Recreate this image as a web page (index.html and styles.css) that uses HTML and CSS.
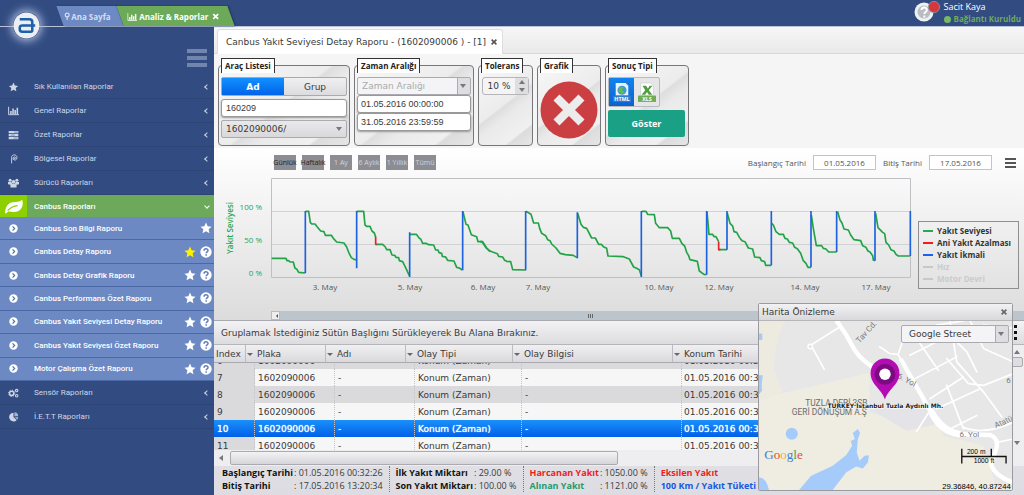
FILE: index.html
```html
<!DOCTYPE html>
<html lang="tr">
<head>
<meta charset="utf-8">
<title>Analiz &amp; Raporlar</title>
<link rel="stylesheet" href="styles.css">
</head>
<body>
<svg class="defs" aria-hidden="true">
  <symbol id="star" viewBox="0 0 16 16"><path d="M8 .8l2.200 4.800 5.200.6-3.900 3.500 1.100 5.200L8 12.300l-4.600 2.600 1.100-5.200L.6 6.200l5.200-.6z" fill="currentColor"/></symbol>
  <symbol id="help" viewBox="0 0 16 16"><circle cx="8" cy="8" r="7.600" fill="currentColor"/><path d="M5.400 6.200C5.400 3 10.700 3 10.700 6c0 1.900-2.500 1.800-2.500 3.700M8.200 11v2" fill="none" stroke="#5f7cb8" stroke-width="2"/></symbol>
  <symbol id="go" viewBox="0 0 16 16"><circle cx="8" cy="8" r="7.500" fill="currentColor"/><path d="M6.300 4.300L10 8l-3.700 3.700" fill="none" stroke="#5370ac" stroke-width="2.200"/></symbol>
  <symbol id="bars" viewBox="0 0 18 14"><path d="M1 0v13h17" fill="none" stroke="currentColor" stroke-width="1.600"/><path d="M3.500 7h2.500v5h-2.500zM7 3h2.500v9H7zM10.500 5.500h2.500V12h-2.500zM14 1.500h2.500V12h-2.500z" fill="currentColor"/></symbol>
</svg>

<header class="top">
  <a class="logo" href="#" aria-label="Ana ekran"><svg viewBox="0 0 28 28"><circle cx="14" cy="14" r="13.500" fill="#eceef1"/><path d="M7 7.500h10q3 0 3 3V19q0 1.500-1.500 1.500h-9q-2.500 0-2.500-2.500v-1.500q0-2.500 2.500-2.500H23M20 14H9" fill="none" stroke="#1d5fa8" stroke-width="2.600"/></svg></a>
  <nav class="tabs">
    <a class="tab" href="#"><span><svg class="pin" viewBox="0 0 10 14"><path d="M5 13V8" stroke="currentColor" stroke-width="2"/><circle cx="5" cy="4.500" r="3.200" fill="none" stroke="currentColor" stroke-width="2"/></svg>Ana Sayfa</span></a>
    <a class="tab active" href="#"><span><svg class="chart-ic"><use href="#bars"/></svg>Analiz &amp; Raporlar<svg class="close-ic" viewBox="0 0 10 10"><path d="M1.500 1.500l7 7M8.500 1.500l-7 7" stroke="currentColor" stroke-width="2.400"/></svg></span></a>
  </nav>
  <div class="user">
    <svg viewBox="0 0 28 22"><circle cx="10" cy="12" r="9.500" fill="#eef0f3"/><circle cx="10" cy="12" r="6.500" fill="#b9bcc2"/><path d="M7.500 10c0-3.400 5.400-3.400 5.400 0 0 2-2.600 2-2.600 4M10.300 15.500v2" fill="none" stroke="#fff" stroke-width="1.900"/><circle cx="20" cy="7" r="5.600" fill="#d8373a" stroke="#8d98ae" stroke-width=".8"/></svg>
    <div><div class="name">Sacit Kaya</div><div class="status"><i></i>Bağlantı Kuruldu</div></div>
  </div>
</header>

<div class="shell">
<aside class="side">
  <button class="burger" aria-label="Menü"><i></i><i></i><i></i></button>
  <ul class="menu">
    <li><a href="#"><svg class="ic"><use href="#star"/></svg><span>Sık Kullanılan Raporlar</span><b class="chev"></b></a></li>
    <li><a href="#"><svg class="ic"><use href="#bars"/></svg><span>Genel Raporlar</span><b class="chev"></b></a></li>
    <li><a href="#"><svg class="ic" viewBox="0 0 16 14"><path d="M1 1h14v3.400H1zM1 5.400h14v3.400H1zM1 9.800h14v3.400H1z" fill="currentColor"/><path d="M9 2.700h5M4 7.100h6M8 11.500h6" stroke="#5a6f9b" stroke-width="1"/></svg><span>Özet Raporlar</span><b class="chev"></b></a></li>
    <li><a href="#"><svg class="ic" viewBox="0 0 14 16"><path d="M4 15V6c0-7 9-5.500 8.500 0-.4 4-4 4.500-6 2.500M6.500 8.500c-1-4 3.500-5 3.500-2.500s-2 2-2 .5" fill="none" stroke="currentColor" stroke-width="1.500"/></svg><span>Bölgesel Raporlar</span><b class="chev"></b></a></li>
    <li><a href="#"><svg class="ic" viewBox="0 0 18 16"><g fill="currentColor"><circle cx="3.500" cy="3.500" r="2.500"/><circle cx="14.500" cy="3.500" r="2.500"/><circle cx="9" cy="6" r="3"/><path d="M0 10V6.500h5.500L7 9l-3 2zM18 10V6.500h-5.500L11 9l3 2zM4 15.500V11q1-2 5-2t5 2v4.500z"/></g></svg><span>Sürücü Raporları</span><b class="chev"></b></a></li>
    <li class="open"><a href="#"><span class="leaf"><svg viewBox="0 0 22 16"><path d="M1 15C2 6 6 3 12 3c4 0 6-1 8-2.500C22 7 19 14 11 14c-3 0-5-.8-6.500-.5L2 16z" fill="#fff"/><path d="M4 12.500C7 9 10 7.500 15 7" fill="none" stroke="#8cd000" stroke-width="1.300"/></svg></span><span>Canbus Raporları</span><b class="chev down"></b></a>
      <ul class="sub">
        <li><a href="#"><svg class="go"><use href="#go"/></svg><span>Canbus Son Bilgi Raporu</span></a><svg class="act"><use href="#star"/></svg></li>
        <li><a href="#"><svg class="go"><use href="#go"/></svg><span>Canbus Detay Raporu</span></a><svg class="act fav"><use href="#star"/></svg><svg class="act"><use href="#help"/></svg></li>
        <li><a href="#"><svg class="go"><use href="#go"/></svg><span>Canbus Detay Grafik Raporu</span></a><svg class="act"><use href="#star"/></svg><svg class="act"><use href="#help"/></svg></li>
        <li><a href="#"><svg class="go"><use href="#go"/></svg><span>Canbus Performans Özet Raporu</span></a><svg class="act"><use href="#star"/></svg><svg class="act"><use href="#help"/></svg></li>
        <li><a href="#"><svg class="go"><use href="#go"/></svg><span>Canbus Yakıt Seviyesi Detay Raporu</span></a><svg class="act"><use href="#star"/></svg><svg class="act"><use href="#help"/></svg></li>
        <li><a href="#"><svg class="go"><use href="#go"/></svg><span>Canbus Yakıt Seviyesi Özet Raporu</span></a><svg class="act"><use href="#star"/></svg><svg class="act"><use href="#help"/></svg></li>
        <li><a href="#"><svg class="go"><use href="#go"/></svg><span>Motor Çalışma Özet Raporu</span></a><svg class="act"><use href="#star"/></svg><svg class="act"><use href="#help"/></svg></li>
      </ul>
    </li>
    <li><a href="#"><svg class="ic" viewBox="0 0 18 16"><g fill="none" stroke="currentColor"><circle cx="6" cy="8.500" r="3.500" stroke-width="2.400"/><circle cx="6" cy="8.500" r="5.200" stroke-width="1.500" stroke-dasharray="2 2.080"/><circle cx="14.200" cy="4" r="2" stroke-width="1.800"/><circle cx="14.200" cy="12.500" r="2" stroke-width="1.800"/></g></svg><span>Sensör Raporları</span><b class="chev"></b></a></li>
    <li><a href="#"><svg class="ic" viewBox="0 0 16 16"><path d="M8 8V1a7 7 0 1 0 5 12z" fill="currentColor"/><path d="M9.500 6.800V.5a6.500 6.500 0 0 1 6 6.300zM9.700 8.300h6a7 7 0 0 1-1.800 4z" fill="currentColor" opacity=".75"/></svg><span>İ.E.T.T Raporları</span><b class="chev"></b></a></li>
  </ul>
</aside>

<main class="main">
  <div class="doc-tabs"><div class="doc-tab">Canbus Yakıt Seviyesi Detay Raporu - (1602090006 ) - [1]<button aria-label="Kapat"><svg viewBox="0 0 10 10"><path d="M2 2l6 6M8 2L2 8" stroke="#555" stroke-width="2"/></svg></button></div></div>

  <form class="filters">
    <fieldset class="f-vehicle"><legend>Araç Listesi</legend>
      <div class="seg"><button type="button" class="on">Ad</button><button type="button">Grup</button></div>
      <input class="box" aria-label="Araç ara" value="160209">
      <div class="combo grey"><select aria-label="Araç"><option>1602090006/</option></select></div>
    </fieldset>
    <fieldset class="f-time"><legend>Zaman Aralığı</legend>
      <div class="combo split faint"><select aria-label="Zaman aralığı"><option>Zaman Aralığı</option></select></div>
      <input class="box date" aria-label="Başlangıç" value="01.05.2016 00:00:00">
      <input class="box date" aria-label="Bitiş" value="31.05.2016 23:59:59">
    </fieldset>
    <fieldset class="f-tol"><legend>Tolerans</legend>
      <div class="spin"><input aria-label="Tolerans" value="10 %"><div><button type="button" class="up" aria-label="Artır"></button><button type="button" class="dn" aria-label="Azalt"></button></div></div>
    </fieldset>
    <fieldset class="f-graph"><legend>Grafik</legend>
      <button type="button" class="cross" aria-label="Grafik kapalı"><svg viewBox="0 0 58 58"><circle cx="29" cy="29" r="28.500" fill="#cb3f42"/><path d="M19.500 19.500l19 19M38.500 19.500l-19 19" stroke="#ececec" stroke-width="8.500" stroke-linecap="square"/></svg></button>
    </fieldset>
    <fieldset class="f-type"><legend>Sonuç Tipi</legend>
      <div class="types">
        <button type="button" class="on" aria-label="HTML"><svg viewBox="0 0 20 22"><path d="M3 1h11l3 3v11H3z" fill="#e9f2fa"/><circle cx="10" cy="9" r="5" fill="#3c9ad6"/><path d="M7 5l5 1-2 3 3 2-3 2.500-4-3z" fill="#63bb4f"/><rect y="15" width="20" height="7" fill="#2c80cf"/><text x="10" y="21" class="tag">HTML</text></svg></button>
        <button type="button" aria-label="XLS"><svg viewBox="0 0 20 22"><path d="M3 1h11l3 3v11H3z" fill="#fff" stroke="#b9c9b2" stroke-width=".6"/><path d="M5 4h4l2 3 2-3h3l-4 5 4 5h-4l-2-3-2 3H4l4-5z" fill="#4f9e3f"/><rect y="15" width="20" height="7" fill="#6fac53"/><text x="10" y="21" class="tag">XLS</text></svg></button>
      </div>
      <button type="button" class="show">Göster</button>
    </fieldset>
  </form>

  <section class="chart">
    <div class="chart-bar">
      <div class="ranges"><button class="lit"><span>Günlük</span></button><button class="lit"><span>Haftalık</span></button><button><span>1 Ay</span></button><button><span>6 Aylık</span></button><button><span>1 Yıllık</span></button><button><span>Tümü</span></button></div>
      <div class="dates"><label for="d1">Başlangıç Tarihi</label><input id="d1" value="01.05.2016"><label for="d2">Bitiş Tarihi</label><input id="d2" value="17.05.2016">
      <button class="ctx" aria-label="Grafik menüsü"><i></i><i></i><i></i></button></div>
    </div>
    <div class="chart-body">
      <svg class="plot" viewBox="214 176 700 120" role="img" aria-label="Yakıt Seviyesi">
        <g fill="none" stroke="#d2d2d5"><path d="M271.500 211.500H910.500M271.500 244.500H910.500"/><path d="M271.500 178.500H910.500V277.500H271.500z" stroke="#bfc0c4"/></g>
        <g class="ylab"><text x="262" y="210">100 %</text><text x="262" y="243">50 %</text><text x="262" y="276">0 %</text></g>
        <text class="ytitle" transform="translate(233 228) rotate(-90)">Yakıt Seviyesi</text>
        <g class="xlab"><text x="325" y="290">3. May</text><text x="410" y="290">5. May</text><text x="483" y="290">6. May</text><text x="538" y="290">7. May</text><text x="659" y="290">10. May</text><text x="719" y="290">12. May</text><text x="805" y="290">14. May</text><text x="876" y="290">17. May</text></g>
        <g transform="translate(210 145) scale(.33333)" class="fuel">
          <path class="g" d="M185 340H228L231 347H236L240 351H250L255 370 260 372 266 382 286 384M287 199H296L301 233 306 237H315L322 246 332 258 342 260 346 271H364L370 280 380 291 402 294 410 306 416 322 424 338 432 343 440 345M440 199H461L465 240 470 244H480L486 258 493 264 497 276M497 298H518L526 306 530 314H540L546 330 554 331 558 337 566 338 568 347 578 350 588 370 598 392M600 268H619L628 280 632 282 638 295H648L656 299 671 300 677 315 684 315 687 323 695 325 697 334 707 336 713 346 732 348 740 367 748 369 757 375M759 200L768 238 774 240 784 269 800 275 804 290 816 290 828 308 840 320"/>
          <path class="b" d="M286 384V198M440 370V198M599 396V262M758 376V198"/><path class="r" d="M497 275V298H500"/>
          <g transform="translate(810 0)">
            <path class="g" d="M0 290H8L15 301 20 309 30 318 40 322 52 326 56 334 68 336 74 346 80 349 92 350 98 374 137 375M138 199L153 208 161 234H175L179 250 185 265 197 272 203 284 210 287 215 297 228 309 240 325 256 329 280 331 291 338M293 205L303 238 310 247 320 250 335 279H346L356 298 364 298 370 305 380 310 384 333 430 335 448 342 461 366 470 370 478 374 484 392M485 199H498L503 208 523 209 527 235 538 248 563 248 572 258 577 280H598L606 296 614 303 620 322 626 332 630 344 652 349 658 378 672 388 679 389M681 200L687 268H698L702 275H708L716 290M716 314H741M742 205L750 235 758 243 762 260 770 262 780 280"/>
            <path class="b" d="M137 376V198M292 340V202M484 396V198M680 389V198M741 314V198"/><path class="r" d="M716 290V314H721"/>
          </g>
          <g transform="translate(1590 0)">
            <path class="g" d="M0 280L6 287 15 290 25 309 38 312 44 336 60 338 64 347 74 350 77 361H94M95 235L100 240 108 260 118 268H130L135 280 142 282 148 292 158 294 164 307 172 311 182 325 190 347 198 355 204 367H213M214 210L220 250 229 302H245L250 310 258 312 266 321H290M293 200L300 225 306 234 312 252 325 255 332 270 342 284 362 287 368 302 378 307 384 318 390 321 398 332 400 345 405 347M407 205L414 248 428 262 434 266 438 292 446 300 453 314 462 318 468 328 475 333H510"/>
            <path class="b" d="M94 361V198M213 367V198M290 321V198M405 347V198M511 333V198"/>
          </g>
        </g>
      </svg>
      <ul class="legend"><li class="g">Yakıt Seviyesi</li><li class="r">Ani Yakıt Azalması</li><li class="b">Yakıt İkmali</li><li class="off">Hız</li><li class="off">Motor Devri</li></ul>
    </div>
    <div class="nav-scroll"><button aria-label="Sola kaydır"></button><span><i></i><i></i><i></i></span></div>
  </section>

  <section class="grid">
    <div class="group-bar"><span>Gruplamak İstediğiniz Sütün Başlığını Sürükleyerek Bu Alana Bırakınız.</span><button aria-label="Seçenekler"><i></i><i></i><i></i></button></div>
    <div class="grid-body">
      <div class="grid-view" id="rows">
        <table>
          <colgroup><col class="c1"><col class="c2"><col class="c2"><col class="c3"><col class="c4"><col></colgroup>
          <thead><tr><th>Index</th><th>Plaka</th><th>Adı</th><th>Olay Tipi</th><th>Olay Bilgisi</th><th>Konum Tarihi</th></tr></thead>
          <tbody>
            <tr><td>6</td><td>1602090006</td><td>-</td><td>Konum (Zaman)</td><td>-</td><td>01.05.2016 00:3</td></tr>
            <tr><td>7</td><td>1602090006</td><td>-</td><td>Konum (Zaman)</td><td>-</td><td>01.05.2016 00:3</td></tr>
            <tr><td>8</td><td>1602090006</td><td>-</td><td>Konum (Zaman)</td><td>-</td><td>01.05.2016 00:3</td></tr>
            <tr><td>9</td><td>1602090006</td><td>-</td><td>Konum (Zaman)</td><td>-</td><td>01.05.2016 00:3</td></tr>
            <tr class="sel"><td>10</td><td>1602090006</td><td>-</td><td>Konum (Zaman)</td><td>-</td><td>01.05.2016 00:3</td></tr>
            <tr><td>11</td><td>1602090006</td><td>-</td><td>Konum (Zaman)</td><td>-</td><td>01.05.2016 00:3</td></tr>
            <tr><td></td><td></td><td></td><td></td><td></td><td></td></tr>
          </tbody>
        </table>
      </div>
      <div class="vbar"><i class="tri up"></i><b></b><i class="tri dn"></i></div>
    </div>
    <div class="hbar"><i class="tri"></i><b></b></div>
    <div class="totals">
      <dl class="t1"><dt>Başlangıç Tarihi</dt><dd>: 01.05.2016 00:32:26</dd><dt>Bitiş Tarihi</dt><dd>: 17.05.2016 13:20:34</dd></dl>
      <dl class="t2"><dt>İlk Yakıt Miktarı</dt><dd>: 29.00 %</dd><dt>Son Yakıt Miktarı</dt><dd>: 100.00 %</dd></dl>
      <dl class="t3"><dt class="red">Harcanan Yakıt</dt><dd>: 1050.00 %</dd><dt class="grn">Alınan Yakıt</dt><dd>: 1121.00 %</dd></dl>
      <dl class="t4"><dt class="red">Eksilen Yakıt</dt><dt class="blu">100 Km / Yakıt Tüketi</dt></dl>
    </div>
  </section>
</main>
</div>

<section class="map-win">
  <h2>Harita Önizleme<button aria-label="Kapat"><svg viewBox="0 0 10 10"><path d="M2 2l6 6M8 2L2 8" stroke="#666" stroke-width="2"/></svg></button></h2>
  <div class="map">
    <svg viewBox="27 78 761 504" preserveAspectRatio="xMidYMid slice" role="img" aria-label="Harita">
      <rect x="27" y="78" width="761" height="504" fill="#e7e7e8"/>
      <path d="M27 78H110Q80 120 75 210L70 300 200 270 360 232V350L500 395 545 360 580 420 700 450 740 582H27z" fill="#efece2"/>
      <path d="M27 78H110Q80 120 72 215L100 290 27 320z" fill="#edeae0"/>
      <path d="M370 345L480 318 540 345 560 385 470 405z" fill="#e4e4e8"/>
      <g fill="#a5cbfb"><path d="M27 115H40V135H27zM27 240H42Q36 270 40 285L27 300z"/><circle cx="128" cy="414" r="18"/><path d="M27 545Q50 540 60 582H27zM150 582L185 540 250 510 290 478 308 450 304 436 316 430 310 412 325 400 332 412 325 430 322 470 330 495 345 480 358 478 355 500 340 518 320 512 290 530 250 582z"/></g>
      <g fill="none" stroke="#fff" stroke-linejoin="round" stroke-linecap="round">
        <path d="M262 78Q290 115 310 155T400 235M455 195L515 300 540 345Q560 400 610 415L720 418Q750 430 735 470L722 500Q725 535 788 560" stroke-width="13"/>
        <path d="M545 350Q575 405 625 415" stroke-width="20"/>
        <path d="M272 95L185 150 225 222M390 155L420 175 445 178 455 195M445 178L465 120M500 130L565 225M480 180L580 130M495 250L620 185M540 310L640 245M590 190L655 265 700 270 788 235M600 78L620 200 700 290 755 365M620 140L650 170 680 230M560 340L690 280M590 270L640 400M540 345L500 408M560 90L640 78M600 400L680 360M640 395Q700 420 788 380M740 440L788 430M700 90L788 100M660 78L700 160 788 200" stroke-width="5"/>
      </g>
      <circle cx="183" cy="154" r="7" fill="#e7e7e8" stroke="#fff" stroke-width="4"/>
      <g class="road"><text transform="translate(330 145) rotate(-48)">Tav Cd.</text><text transform="translate(441 247) rotate(28)">6. Yol</text><text x="628" y="423">6. Yol</text><text transform="translate(736 398) rotate(-24)">Atatü</text><text x="768" y="264">6</text></g>
      <g class="place"><text x="168" y="331">TUZLA DERİ 3SB</text><text x="128" y="357">GERİ DÖNÜŞÜM A.Ş</text></g>
      <path d="M406 312C396 280 363 268 363 233a43 43 0 0 1 86 0C449 268 416 280 406 312z" fill="#b30cb3"/><circle cx="406" cy="237" r="31" fill="#7c0a80"/><circle cx="406" cy="237" r="17" fill="#fff"/>
      <text x="407" y="338" class="addr">TURKEY İstanbul Tuzla Aydınlı Mh.</text>
      <text x="46" y="491" class="google"><tspan fill="#3f7de0">G</tspan><tspan fill="#df4a3c">o</tspan><tspan fill="#f0b41c">o</tspan><tspan fill="#3f7de0">g</tspan><tspan fill="#3aa757">l</tspan><tspan fill="#df4a3c">e</tspan></text>
      <path d="M635 459V503M635 482H767V503M723 459V482" fill="none" stroke="#111" stroke-width="4"/>
      <text x="678" y="476" class="scale">200 m</text><text x="701" y="501" class="scale">1000 ft</text>
      <text x="781" y="578" class="coord">29.36846, 40.87244</text>
    </svg>
    <div class="combo split layer"><select aria-label="Harita katmanı"><option>Google Street</option></select></div>
  </div>
</section>
<script>
  document.getElementById('rows').scrollTop = 11;
</script>
</body>
</html>
```
FILE: styles.css
```css
* { box-sizing: border-box; }
html, body { height: 100%; }
body { margin: 0; display: flex; flex-direction: column; position: relative; overflow: hidden; font-family: "DejaVu Sans", sans-serif; font-size: 9px; color: #3a3a3a; background: #f5f5f5; }
button, input, select { font: inherit; color: inherit; margin: 0; padding: 0; border: 0; background: none; min-width: 0; }
a { color: inherit; text-decoration: none; }
ul, dl, dd { margin: 0; padding: 0; list-style: none; }
svg { display: block; flex: none; }
.defs { position: absolute; width: 0; height: 0; }

/* top bar */
.top { flex: none; position: relative; z-index: 2; height: 27px; display: flex; align-items: flex-end; justify-content: space-between; background: #324c82; border-bottom: 1px solid #b8c3da; }
.logo { position: absolute; left: 13px; top: 12px; width: 27px; height: 27px; border-radius: 50%; box-shadow: 0 0 8px 2px #aab9d8; }
.tabs { display: flex; padding-left: 60px; font: bold 8px "Open Sans", sans-serif; color: #fff; }
.tab { display: flex; align-items: center; height: 20px; padding: 0 10px 0 4px; background: #6c89c4; color: #d5def1; transform: skewX(20deg); box-shadow: 1px 0 2px #1f335f; }
.tab span { display: flex; align-items: center; transform: skewX(-20deg); }
.tab.active { background: #6caa59; color: #fff; padding: 0 12px 0 7px; }
.pin { width: 6px; height: 9px; margin-right: 1px; }
.chart-ic { width: 10px; height: 8px; margin-right: 2px; }
.close-ic { width: 7px; height: 7px; margin-left: 4px; }
.user { display: flex; gap: 2px; align-self: flex-start; padding-right: 3px; font-family: "Open Sans", sans-serif; color: #fff; }
.user svg { width: 28px; height: 22px; }
.name { font-size: 9px; line-height: 13px; }
.status { display: flex; align-items: center; gap: 3px; font-size: 8px; font-weight: bold; line-height: 12px; color: #6caa59; }
.status i { width: 7px; height: 7px; border-radius: 50%; background: #78b865; }

.shell { flex: 1; display: flex; min-height: 0; }

/* side menu */
.side { flex: none; width: 214px; display: flex; flex-direction: column; background: #324c82; color: #ced6e6; font-family: Roboto, sans-serif; font-size: 8px; }
.burger { align-self: flex-end; display: flex; flex-direction: column; gap: 3px; margin: 22px 7px 8px 0; }
.burger i { width: 20px; height: 4px; background: #7185ae; }
.menu > li > a { display: flex; align-items: center; height: 24px; padding-right: 5px; border-bottom: 1px solid #2d4576; }
.menu a span:not(.leaf) { flex: 1; }
.ic { width: 11px; height: 10px; margin: 0 15px 0 8px; }
.chev { width: 4px; height: 4px; border: solid currentColor; border-width: 0 0 1px 1px; transform: rotate(45deg); }
.chev.down { transform: rotate(-45deg); }
.menu > li.open > a { height: 22px; background: #6da95a; color: #fff; border: 0; font-weight: 500; }
.leaf { width: 27px; height: 22px; display: grid; place-items: center; background: #8cd000; margin-right: 7px; }
.leaf svg { width: 20px; height: 15px; }
.sub { display: grid; grid-auto-rows: 1fr; height: 164px; background: #6c89c4; color: #fff; font-weight: 500; }
.sub li { display: flex; align-items: center; gap: 4px; padding-right: 2px; border-bottom: 1px solid #4a68a6; }
.sub a { flex: 1; display: flex; align-items: center; }
.go { width: 9px; height: 9px; margin: 0 16px 0 9px; }
.act { width: 12px; height: 12px; }
.fav { color: #fff200; }

/* document tab and filters */
.main { flex: 1; min-width: 0; display: flex; flex-direction: column; background: #f5f5f5; }
.doc-tabs { display: flex; padding: 2px 3px 0; background: linear-gradient(#f6f6f6, #e9e9e9); border-bottom: 1px solid #d8d8d8; }
.doc-tab { display: flex; align-items: center; gap: 4px; height: 25px; padding: 0 4px 0 8px; background: #fff; border: 1px solid #ddd; border-bottom: 0; margin-bottom: -1px; border-radius: 3px 3px 0 0; }
.doc-tab svg { width: 8px; height: 8px; }
.filters { display: flex; gap: 4px; padding: 4px 4px 2px; }
fieldset { min-width: 0; margin: 0; height: 88px; padding: 4px 2px 0; border: 1px solid #77777b; border-radius: 4px; background: linear-gradient(142deg, #f7f7f7, #ececec 48%, #dedede 50%, #eaeaea 60%, #f0f0f0 82%, #dcdcdc 84%, #e6e6e6); }
legend { height: 15px; padding: 0 3px; border: 1px solid #333; border-bottom: 0; background: #fff; font: bold 8px/14px "Open Sans", sans-serif; color: #222; }
.f-vehicle { width: 132px; }
.f-time { width: 120px; }
.f-tol { width: 55px; }
.f-graph { width: 64px; }
.f-type { width: 84px; }
.seg { display: grid; grid-template-columns: 1fr 1fr; height: 19px; border: 1px solid #a9a9af; border-radius: 2px; background: linear-gradient(#f0f0f2, #dcdce0); }
.seg .on { color: #fff; background: linear-gradient(#1290ff, #0063e8); font-weight: bold; }
.box { display: block; width: 100%; height: 18px; margin-top: 3px; padding: 0 4px; border: 1px solid #999; border-radius: 3px; background: #fff; box-shadow: 0 1px 2px #999; font-family: "Liberation Sans", sans-serif; }
.box.date { margin-top: 0; padding: 0 3px; }
.combo { position: relative; height: 18px; margin-top: 3px; border: 1px solid #aaaab0; border-radius: 2px; background: #f6f6f7; }
.combo select { appearance: none; width: 100%; height: 100%; padding-left: 4px; }
.combo::after { content: ""; position: absolute; right: 4px; top: 6px; border: 3px solid transparent; border-top: 4px solid #77777c; border-bottom: 0; pointer-events: none; }
.combo.grey { background: linear-gradient(#e9e9eb, #d9d9dc); }
.combo.split { background: linear-gradient(90deg, #f4f4f6 calc(100% - 13px), #aaaab0 calc(100% - 13px), #aaaab0 calc(100% - 12px), #dedee2 calc(100% - 12px)); }
.combo.faint { margin-top: 0; color: #aaa; }
.spin { display: flex; height: 18px; margin: 0 1px; border: 1px solid #b5b5ba; border-radius: 3px; background: #f4f4f5; }
.spin input { flex: 1; width: 0; text-align: center; }
.spin > div { display: grid; width: 13px; background: #dedee1; }
.spin button { margin: auto; border: 3px solid transparent; }
.spin .up { border-bottom: 4px solid #77777c; border-top: 0; }
.spin .dn { border-top: 4px solid #77777c; border-bottom: 0; }
.cross { display: block; margin: 4px auto 0; }
.cross svg { width: 58px; height: 58px; }
.types { display: flex; width: 52px; height: 30px; border: 1px solid #b9b9be; border-radius: 2px; background: #e6e6e9; }
.types button { flex: 1; display: grid; place-items: center; }
.types .on { background: linear-gradient(#1183ee, #0a63cf); }
.types svg { width: 18px; height: 22px; }
.tag { font: bold 6px "Open Sans", sans-serif; fill: #fff; text-anchor: middle; }
.show { display: block; width: 77px; height: 27px; margin-top: 3px; border-radius: 2px; background: #19a085; color: #fff; font: bold 9px "Open Sans", sans-serif; }

/* chart */
.chart { display: flex; flex-direction: column; background: linear-gradient(#fff, #dcdcdc); font-family: "Open Sans", sans-serif; font-size: 8px; border-bottom: 1px solid #a9aab0; }
.chart-bar { display: flex; justify-content: space-between; padding: 7px 8px 0 60px; height: 28px; }
.ranges { display: flex; gap: 6px; }
.ranges button { display: flex; justify-content: center; align-items: center; width: 22px; height: 15px; background: #8c8c93; color: #d4d4d8; font-size: 7px; }
.ranges .lit { color: #222; }
.ranges span { white-space: nowrap; }
.dates { display: flex; align-items: flex-start; gap: 7px; line-height: 15px; color: #555; }
.dates input { width: 63px; height: 15px; border: 1px solid #c4c4c4; background: #fff; text-align: center; }
.ctx { display: flex; flex-direction: column; gap: 2px; margin: 3px 0 0 6px; }
.ctx i { width: 11px; height: 2px; background: #555; }
.chart-body { display: flex; align-items: flex-start; gap: 4px; padding-right: 5px; }
.plot { flex: 1; min-width: 0; }
.plot text { font-size: 8px; }
.ylab { fill: #27a54c; text-anchor: end; }
.ytitle { fill: #27a54c; text-anchor: middle; font-weight: 600; }
.xlab { fill: #555; text-anchor: middle; }
.fuel path { fill: none; stroke-width: 5; stroke-linejoin: round; }
.fuel .g { stroke: #21a346; }
.fuel .r { stroke: #e8202c; }
.fuel .b { stroke: #1c62e0; }
.legend { width: 101px; margin-top: 45px; padding: 3px 4px; border: 1px solid #8f8f8f; font-weight: bold; color: #333; }
.legend li { display: flex; align-items: center; gap: 4px; line-height: 12px; white-space: nowrap; }
.legend li::before { content: ""; width: 10px; height: 2px; background: #c8c8c8; }
.legend .g::before { background: #27ab4c; }
.legend .r::before { background: #f01c1c; }
.legend .b::before { background: #1c62f0; }
.legend .off { color: #cbcbcb; }
.nav-scroll { display: flex; height: 9px; margin: 15px 0 0 57px; background: #bcc5cb; }
.nav-scroll button { width: 9px; background: #eee; border: 1px solid #bbb; }
.nav-scroll button::before { content: ""; display: block; width: 2px; margin: 0 auto; border: 2px solid transparent; border-right-color: #555; border-left: 0; }
.nav-scroll span { width: 620px; display: flex; justify-content: center; align-items: center; gap: 1px; }
.nav-scroll i { width: 1px; height: 4px; background: #666; }

/* event grid */
.grid { flex: 1; min-height: 0; display: flex; flex-direction: column; background: linear-gradient(#eee, #dcdce2); }
.group-bar { display: flex; justify-content: space-between; align-items: center; height: 24px; padding: 0 7px; background: linear-gradient(#f3f3f5, #dcdcdf); border-bottom: 1px solid #b5b5ba; }
.group-bar button { display: grid; gap: 3px; }
.group-bar i { width: 3px; height: 3px; background: #111; }
.grid-body { flex: 1; display: flex; min-height: 0; }
.grid-view { flex: 1; min-width: 0; overflow: hidden; background: #f6f6f7; }
table { width: 100%; table-layout: fixed; border-collapse: separate; border-spacing: 0; }
.c1 { width: 41px; }
.c2 { width: 80px; }
.c3 { width: 107px; }
.c4 { width: 160px; }
th { position: sticky; top: 0; height: 18px; padding: 0 0 0 2px; text-align: left; font-weight: normal; background: linear-gradient(#f0f0f2, #dadade); border-bottom: 1px solid #a9a9af; }
th:not(:last-child)::before { content: ""; position: absolute; right: 9px; top: 0; bottom: 0; border-left: 1px solid #bcbcc0; }
th:not(:last-child)::after { content: ""; position: absolute; right: 2px; top: 8px; border: 3px solid transparent; border-top: 3px solid #66666b; border-bottom: 0; }
td { height: 17px; padding: 0 3px; white-space: nowrap; overflow: hidden; border-right: 1px dotted #c4c4c8; }
td:last-child { padding-left: 2px; border-right: 0; }
tbody tr:nth-child(odd) td, tbody tr:not(.sel) td:first-child { background: #dadadd; }
tbody tr.sel td { background: linear-gradient(#1a90fb, #0060e8); color: #fff; text-shadow: 0 0 1px #fff; }
.vbar { width: 14px; display: flex; flex-direction: column; align-items: center; padding: 5px 0; background: #eeeef0; }
.vbar b { width: 12px; height: 10px; margin-top: 3px; border: 1px solid #aaa; border-radius: 2px; background: #dedee2; }
.tri { border: 3px solid transparent; }
.tri.up { border-bottom: 4px solid #77777c; border-top: 0; }
.tri.dn { border-top: 4px solid #77777c; border-bottom: 0; margin-top: auto; }
.hbar { display: flex; align-items: center; height: 16px; padding-left: 5px; background: #eeeef0; }
.hbar .tri { border-right: 4px solid #77777c; border-left: 0; }
.hbar b { width: 388px; height: 14px; margin-left: 7px; border: 1px solid #aaaab0; border-radius: 2px; background: linear-gradient(#f3f3f5, #d6d6da); }
.totals { display: flex; align-items: flex-start; height: 29px; padding: 0 8px; overflow: hidden; font: 9px/13px "Open Sans", sans-serif; white-space: nowrap; }
.totals dl { flex: none; display: grid; grid-template-columns: 1fr auto; column-gap: 1px; padding-right: 6px; border-right: 1px dotted #777; margin-right: 6px; }
.totals dt { font-weight: bold; color: #111; }
.totals .red { color: #ee1c24; }
.totals .grn { color: #259a6c; }
.totals .blu { color: #1558e0; }
.totals .t4 { display: block; border: 0; }

/* map window */
.map-win { position: absolute; z-index: 3; right: 11px; bottom: 4px; width: 255px; height: 188px; display: flex; flex-direction: column; border: 1px solid #9a9aa0; border-radius: 2px; background: #fff; }
.map-win h2 { flex: none; display: flex; justify-content: space-between; align-items: center; height: 17px; margin: 0; padding: 0 4px 0 3px; font-size: 9px; font-weight: normal; background: linear-gradient(#f2f2f4, #d9d9dd); border-bottom: 1px solid #b5b5ba; }
.map-win h2 svg { width: 8px; height: 8px; }
.map { position: relative; flex: 1; min-height: 0; }
.map > svg { width: 100%; height: 100%; }
.layer { position: absolute; top: 4px; right: 3px; width: 108px; margin: 0; }
.layer select { padding-left: 7px; }
.road { font: 24px Roboto, sans-serif; fill: #7b7b7b; }
.place { font: 25px Roboto, sans-serif; fill: #6b6b6b; }
.addr { font: bold 18px "DejaVu Sans", sans-serif; fill: #222; text-anchor: middle; stroke: #fff; stroke-width: 3; paint-order: stroke; }
.google { font: 39px "Liberation Serif", serif; }
.scale { font: 20px "Liberation Sans", sans-serif; text-anchor: middle; }
.coord { font: 23px "Liberation Sans", sans-serif; text-anchor: end; }
```
